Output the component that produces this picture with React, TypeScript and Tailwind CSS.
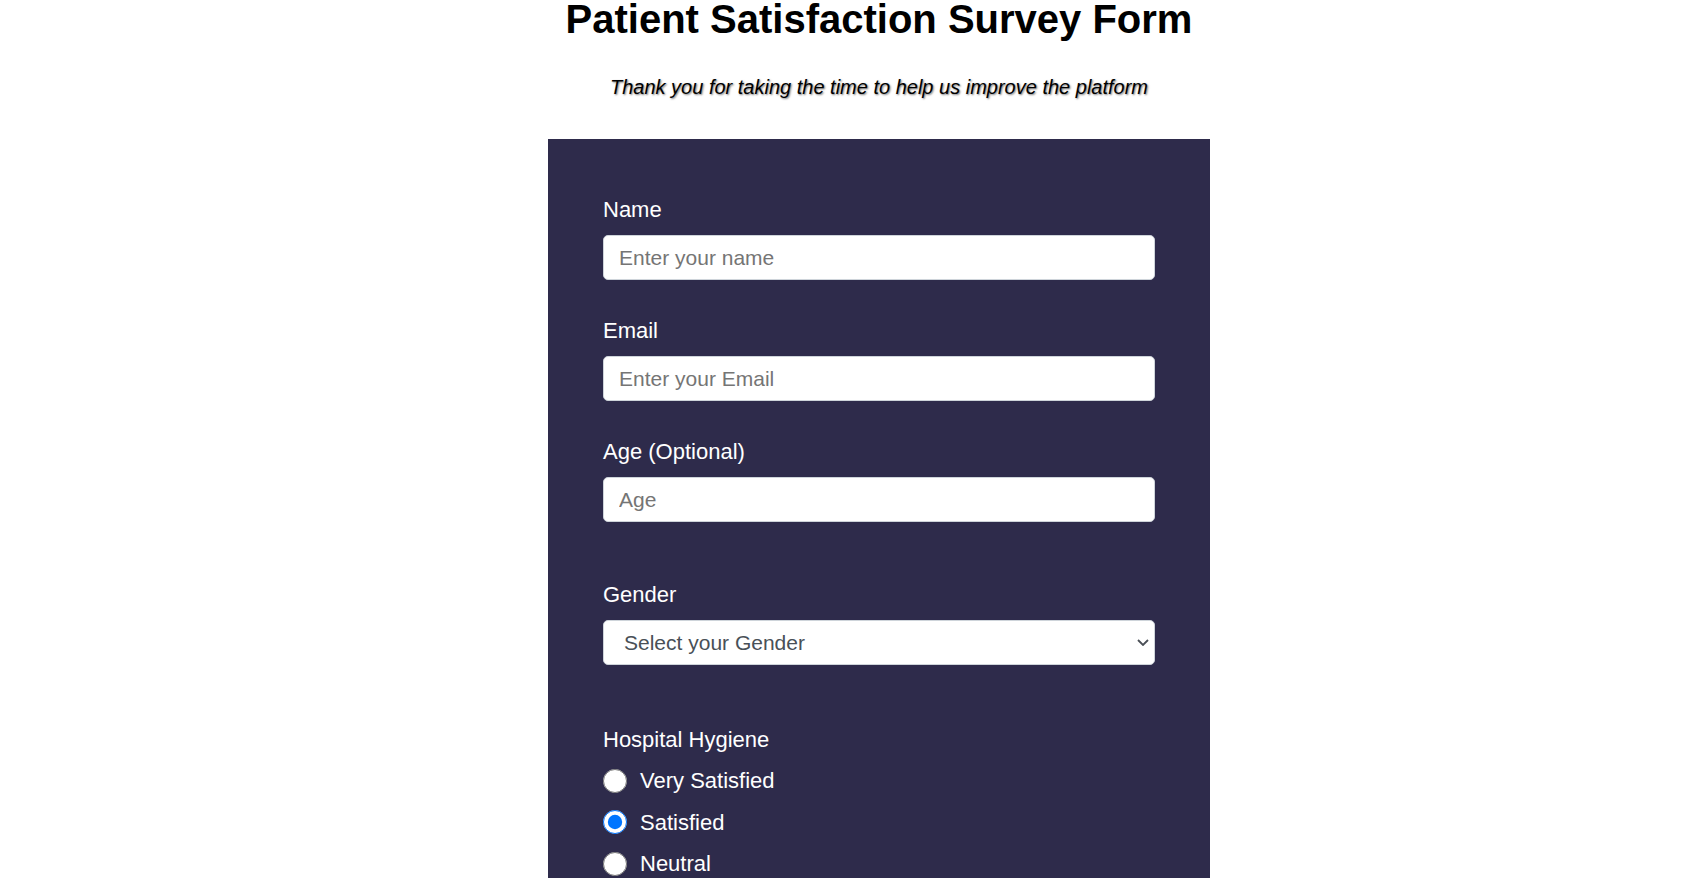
import React, { useState } from 'react';

const fields = [
  { id: 'name', label: 'Name', type: 'text', placeholder: 'Enter your name' },
  { id: 'email', label: 'Email', type: 'email', placeholder: 'Enter your Email' },
  { id: 'age', label: 'Age (Optional)', type: 'number', placeholder: 'Age' },
];

const ratings = ['Very Satisfied', 'Satisfied', 'Neutral', 'Dissatisfied', 'Very Dissatisfied'];

function RadioGroup({ name, title, initial }: { name: string; title: string; initial?: string }) {
  const [value, setValue] = useState(initial ?? '');
  return (
    <div className="flex flex-col">
      <p className="text-[22px] leading-[25px] mb-[8px]">{title}</p>
      {ratings.map((r) => (
        <label key={r} className="flex items-center h-[41.5px] gap-[13px] cursor-pointer">
          <input
            type="radio"
            name={name}
            value={r}
            checked={value === r}
            onChange={() => setValue(r)}
            className="w-6 h-6 m-0"
          />
          <span className="text-[22px]">{r}</span>
        </label>
      ))}
    </div>
  );
}

export default function App() {
  return (
    <div className="min-h-screen bg-white font-['Liberation_Sans',Arial,sans-serif] pl-[60px] flex flex-col items-center">
      <h1 className="-mt-[4px] text-[40px] leading-[46px] font-bold text-black">Patient Satisfaction Survey Form</h1>
      <p className="mt-[34px] text-[20px] leading-[23px] italic text-black [text-shadow:1px_1px_2px_#777]">
        Thank you for taking the time to help us improve the platform
      </p>

      <form className="mt-[40px] w-[662px] bg-[#2e2b4b] text-white px-[55px] pt-[58px] pb-16 flex flex-col">
        {fields.map((f, i) => (
          <div key={f.id} className={i === 0 ? 'flex flex-col' : 'flex flex-col mt-[38px]'}>
            <label htmlFor={f.id} className="text-[22px] leading-[25px]">{f.label}</label>
            <input
              id={f.id}
              type={f.type}
              placeholder={f.placeholder}
              className="mt-[13px] h-[45px] w-full rounded-[5px] border border-[#ced4da] bg-white px-[15px] text-[21px] text-[#333] placeholder:text-[#757575] outline-none"
            />
          </div>
        ))}

        <div className="flex flex-col mt-[60px]">
          <label htmlFor="gender" className="text-[22px] leading-[25px]">Gender</label>
          <div className="relative mt-[13px]">
            <select
              id="gender"
              defaultValue=""
              className="appearance-none h-[45px] w-full rounded-[5px] border border-[#ced4da] bg-white pl-[20px] text-[21px] text-[#495057] outline-none"
            >
              <option value="" disabled>Select your Gender</option>
              <option>Male</option>
              <option>Female</option>
              <option>Other</option>
            </select>
            <svg className="absolute right-[6px] top-[19px] pointer-events-none" width="12" height="7" viewBox="0 0 12 7" fill="none">
              <path d="M1 1l5 5 5-5" stroke="#4a4f56" strokeWidth="1.8" />
            </svg>
          </div>
        </div>

        <div className="mt-[62px]">
          <RadioGroup name="hygiene" title="Hospital Hygiene" initial="Satisfied" />
        </div>
        <div className="mt-[40px]">
          <RadioGroup name="staff" title="Staff Behaviour" />
        </div>
        <div className="mt-[40px] flex flex-col">
          <label htmlFor="comments" className="text-[22px] leading-[25px]">Comments</label>
          <textarea
            id="comments"
            placeholder="Any suggestions?"
            className="mt-[13px] h-32 w-full rounded-[5px] border border-[#ced4da] bg-white px-[15px] py-2 text-[21px] text-[#333] placeholder:text-[#757575] outline-none"
          />
        </div>
        <button type="submit" className="mt-10 h-12 rounded-[5px] bg-[#37af65] text-[22px] text-white">Submit</button>
      </form>
    </div>
  );
}
